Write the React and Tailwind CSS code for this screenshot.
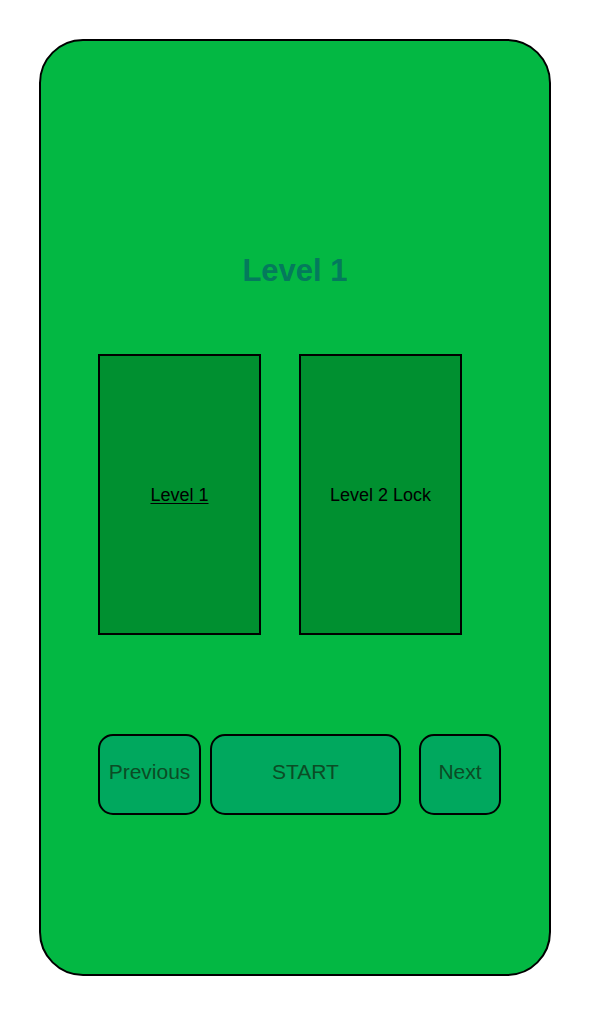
export default function App() {
  return (
    <div className="w-[590px] h-[1015px] bg-white" style={{ fontFamily: '"Liberation Sans", Arial, sans-serif' }}>
      <div className="ml-[39px] pt-[39px]">
        <div className="box-border w-[512px] h-[937px] border-2 border-black rounded-[44px] bg-[#03b843] flex flex-col">
          <div className="mt-[212px] h-[36px] leading-[36px] text-center text-[31px] font-bold text-[#047a5c]">Level 1</div>
          <div className="mt-[65px] pl-[57px] flex gap-[38px]">
            <div className="box-border w-[163px] h-[281px] border-2 border-black bg-[#009030] flex items-center justify-center pt-[2px]">
              <span className="text-[18px] text-black underline underline-offset-2">Level 1</span>
            </div>
            <div className="box-border w-[163px] h-[281px] border-2 border-black bg-[#009030] flex items-center justify-center pt-[2px]">
              <span className="text-[18px] text-black">Level 2 Lock</span>
            </div>
          </div>
          <div className="mt-[99px] pl-[57px] flex">
            <div className="box-border w-[103px] h-[81px] border-2 border-black rounded-[15px] bg-[#00a85e] flex items-center justify-center pb-[5px] text-[21px] text-[#0b4c25]">Previous</div>
            <div className="box-border ml-[9px] w-[191px] h-[81px] border-2 border-black rounded-[15px] bg-[#00a85e] flex items-center justify-center pb-[5px] text-[21px] text-[#0b4c25]">START</div>
            <div className="box-border ml-[18px] w-[82px] h-[81px] border-2 border-black rounded-[15px] bg-[#00a85e] flex items-center justify-center pb-[5px] text-[21px] text-[#0b4c25]">Next</div>
          </div>
        </div>
      </div>
    </div>
  );
}
